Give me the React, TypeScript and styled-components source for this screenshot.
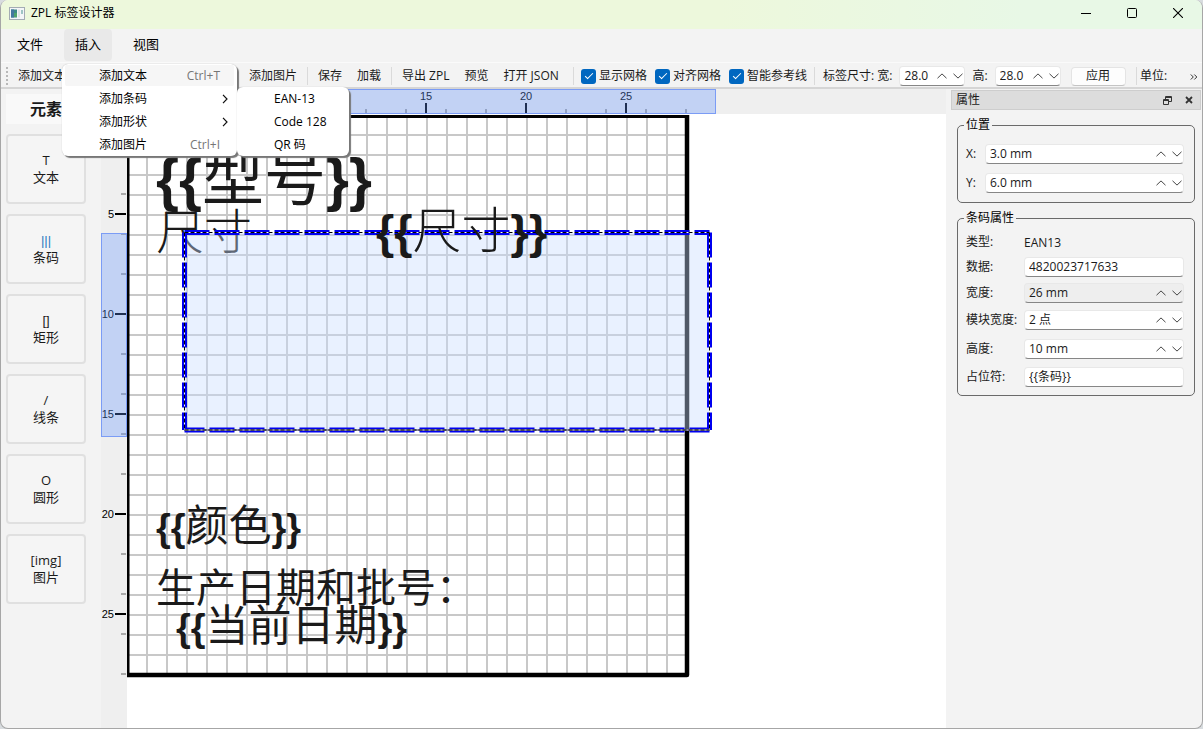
import React from 'react';
import styled, { createGlobalStyle, css } from 'styled-components';

const GlobalStyle = createGlobalStyle`
  *, *::before, *::after { box-sizing: border-box; }
  body {
    margin: 0;
    background: #d8dcdf;
    color: #1a1a1a;
    font: 12px/16px "Open Sans", "Noto Sans CJK SC", sans-serif;
  }
  button, input { font: inherit; color: inherit; margin: 0; }
  button { border: 0; padding: 0; background: none; }
`;

const Window = styled.div`
  display: flex;
  flex-direction: column;
  min-height: 100vh;
  border: 1px solid #a6a6a6;
  border-top: 0;
  border-radius: 8px;
  background: #f3f3f3;
  overflow: hidden;
`;

const TitleBar = styled.header`
  display: flex;
  align-items: flex-start;
  height: 29px;
  padding: 0 1px 0 8px;
  background: linear-gradient(90deg, #edf8dc 0%, #edf8dc 60%, #e8f8e6 85%);
`;

const AppIcon = styled.svg`
  width: 16px;
  height: 13px;
  margin-top: 7px;
`;

const Title = styled.h1`
  flex: 1;
  margin: 5px 0 0 6px;
  font-size: 12px;
  font-weight: 400;
  color: #000;
`;

const CaptionButton = styled.button`
  display: flex;
  align-items: center;
  justify-content: center;
  width: 46px;
  height: 26px;
`;

const MenuBar = styled.nav`
  display: flex;
  gap: 10px;
  height: 33px;
  padding-left: 5px;
`;

const MenuEntry = styled.div`
  position: relative;
`;

const MenuTitle = styled.button<{ $open?: boolean }>`
  width: 48px;
  height: 32px;
  padding-bottom: 3px;
  border-radius: 4px;
  font-size: 13px;
  color: #000;
  background: ${p => (p.$open ? '#e9e9e9' : 'transparent')};
`;

const Menu = styled.div<{ $sub?: boolean }>`
  position: absolute;
  z-index: 2;
  top: 35px;
  left: -2px;
  width: 175px;
  border-radius: 6px;
  background: #fff;
  box-shadow: 2px 2px 1px #777, 0 0 1px #aaa;
  ${p => p.$sub && css`
    z-index: 3;
    top: 58px;
    left: 173px;
    width: 112px;
  `}
`;

const MenuItem = styled.button<{ $active?: boolean; $sub?: boolean; $arrow?: boolean }>`
  display: flex;
  align-items: center;
  justify-content: space-between;
  width: 100%;
  height: 23px;
  padding: 0 ${p => (p.$arrow ? 6 : 14)}px 0 34px;
  color: #000;
  border-radius: 4px;
  border: solid transparent;
  border-width: 1px 3px;
  background: ${p => (p.$active ? '#f6f6f6' : 'transparent')};
  background-clip: padding-box;
`;

const Shortcut = styled.span`
  color: #767676;
`;

const ToolBar = styled.div`
  display: flex;
  align-items: center;
  height: 27px;
  padding: 2px 0 0 5px;
  border-top: 1px solid #fafafa;
  border-bottom: 2px solid #d5d5d5;
  white-space: nowrap;
`;

const Grip = styled.span`
  width: 2px;
  height: 18px;
  margin-right: 10px;
  background: repeating-linear-gradient(180deg, #b8b8b8 0 2px, transparent 2px 4px);
`;

const ToolGroup = styled.div<{ $width: number; $sep?: boolean; $gap?: number; $pad?: number }>`
  display: flex;
  align-items: center;
  flex: 0 0 ${p => p.$width}px;
  gap: ${p => p.$gap ?? 15}px;
  height: 18px;
  ${p => p.$sep && css`
    padding-left: ${p.$pad ?? 10}px;
    border-left: 1px solid #dadada;
  `}
`;

const CheckLabel = styled.label`
  display: flex;
  align-items: center;
  gap: 3px;
`;

const CheckBox = styled.input.attrs({ type: 'checkbox' })`
  appearance: none;
  display: grid;
  place-items: center;
  width: 15px;
  height: 15px;
  border-radius: 3px;
  background: #0067c0;
  &:checked::after {
    content: "";
    width: 8px;
    height: 4px;
    margin-bottom: 3px;
    border: solid #fff;
    border-width: 0 0 1px 1px;
    transform: rotate(-45deg);
  }
`;

const PushButton = styled.button`
  width: 55px;
  height: 19px;
  margin-left: 3px;
  border: 1px solid #e4e4e4;
  border-bottom-color: #c4c4c4;
  border-radius: 4px;
  background: #fdfdfd;
  line-height: 16px;
`;

const Field = styled.div<{ $width?: number; $disabled?: boolean }>`
  display: flex;
  align-items: center;
  width: ${p => (p.$width ? `${p.$width}px` : '100%')};
  height: 20px;
  border: 1px solid #e8e8e8;
  border-bottom-color: #868686;
  border-radius: 4px;
  padding-left: 4px;
  background: ${p => (p.$disabled ? '#eeeeee' : '#fff')};
`;

const FieldInput = styled.input`
  flex: 1;
  min-width: 0;
  height: 16px;
  padding: 0;
  border: 0;
  outline: 0;
  background: transparent;
`;

const StepButton = styled.button`
  display: flex;
  align-items: center;
  justify-content: center;
  width: 20px;
  height: 16px;
  &:last-child { width: 12px; }
`;

const Workspace = styled.main`
  display: flex;
  flex: 1;
`;

const Palette = styled.aside`
  display: flex;
  flex-direction: column;
  gap: 10px;
  width: 100px;
  padding: 5px 15px 5px 5px;
`;

const PaletteTitle = styled.h2`
  margin: 0;
  height: 30px;
  background: #f9f9f9;
  font-size: 16px;
  line-height: 30px;
  text-align: center;
`;

const PaletteCard = styled.button`
  display: flex;
  flex-direction: column;
  align-items: center;
  justify-content: center;
  height: 70px;
  border: 2px solid #e0e0e0;
  border-radius: 4px;
  background: #f5f5f5;
  font-size: 13px;
  line-height: 17px;
`;

const Symbol = styled.span<{ $narrow: boolean; $blue: boolean }>`
  ${p => p.$narrow && css`font-family: "Liberation Sans", sans-serif;`}
  ${p => p.$blue && css`color: #2c7cc0;`}
`;

const Designer = styled.section`
  display: grid;
  flex: 1;
  min-width: 0;
  grid-template-columns: 26px 1fr;
  grid-template-rows: 25px 1fr;
`;

const RulerCorner = styled.div`
  background: #efefef;
`;

const RulerSvg = styled.svg`
  display: block;
  width: 100%;
  height: 100%;
  background: #efefef;
  font: 11px "Liberation Sans", sans-serif;
`;

const Board = styled.svg`
  display: block;
  width: 100%;
  height: 100%;
  background: #fff;
  font-family: "Liberation Sans", "Noto Sans CJK SC", sans-serif;
  fill: #1a1a1a;
`;

const Dock = styled.aside`
  width: 256px;
  padding: 1px 1px 0 5px;
`;

const DockTitle = styled.div`
  display: flex;
  align-items: center;
  height: 20px;
  padding: 0 1px 0 4px;
  border: 1px solid #cdcdcd;
  background: #dcdcdc;
`;

const DockName = styled.h2`
  flex: 1;
  margin: 0;
  font-size: 12px;
  font-weight: 400;
`;

const DockButton = styled.button`
  display: flex;
  align-items: center;
  justify-content: center;
  width: 21px;
  height: 16px;
`;

const Group = styled.fieldset<{ $label: number; $rows: string; $top: number }>`
  display: grid;
  grid-template-columns: ${p => p.$label}px minmax(0, 1fr);
  grid-template-rows: ${p => p.$rows};
  align-items: center;
  min-width: 0;
  margin: 7px 6px 0;
  padding: ${p => p.$top}px 10px 5px 8px;
  border: 1px solid #6a6a6a;
  border-radius: 5px;
  white-space: nowrap;
`;

const Legend = styled.legend`
  margin-left: -2px;
  padding: 0 2px;
  color: #000;
`;

const Value = styled.output`
  padding-top: 1px;
`;

function Steps() {
  return (
    <>
      <StepButton aria-label="增加">
        <svg width="10" height="6" fill="none" stroke="#444"><path d="M.5 5.200 5 .9l4.500 4.300" /></svg>
      </StepButton>
      <StepButton aria-label="减少">
        <svg width="10" height="6" fill="none" stroke="#444"><path d="M.5.8 5 5.100 9.500.8" /></svg>
      </StepButton>
    </>
  );
}

function SpinBox({ id, value, width, disabled }: { id: string; value: string; width?: number; disabled?: boolean }) {
  return (
    <Field $width={width} $disabled={disabled}>
      <FieldInput id={id} defaultValue={value} readOnly={disabled} />
      <Steps />
    </Field>
  );
}

const PX_PER_MM = 20;
const MAJOR = [5, 10, 15, 20, 25];
const MINOR = Array.from({ length: 14 }, (_, i) => (i + 1) * 2).filter(n => n % 5 !== 0);

const Chevron = () => (
  <svg width="6" height="10" fill="none" stroke="#111" strokeWidth="1.200"><path d="M1 .8 5 5 1 9.200" /></svg>
);

function HorizontalRuler() {
  return (
    <RulerSvg>
      {MAJOR.map(n => (
        <g key={n}>
          <text x={n * PX_PER_MM - 1} y="11" textAnchor="middle">{n}</text>
          <path d={`M${n * PX_PER_MM - 1} 14v11`} stroke="#000" strokeWidth="2" />
        </g>
      ))}
      {MINOR.map(n => <path key={n} d={`M${n * PX_PER_MM - 1} 20v5`} stroke="#aaa" strokeWidth="2" />)}
      <rect x="60.500" y=".5" width="528" height="24" fill="rgba(100,149,255,.32)" stroke="#7b9cf5" />
    </RulerSvg>
  );
}

function VerticalRuler() {
  return (
    <RulerSvg>
      {MAJOR.map(n => (
        <g key={n}>
          <text x="13" y={n * PX_PER_MM + 4} textAnchor="end">{n}</text>
          <path d={`M14 ${n * PX_PER_MM}h11`} stroke="#000" strokeWidth="2" />
        </g>
      ))}
      {MINOR.map(n => <path key={n} d={`M20 ${n * PX_PER_MM}h5`} stroke="#aaa" strokeWidth="2" />)}
      <rect x=".5" y="119.500" width="25" height="203" fill="rgba(100,149,255,.32)" stroke="#7b9cf5" />
    </RulerSvg>
  );
}

interface PlaceholderProps { x: number; y: number; size: number; brace: number; weight?: number; children: string }

function PlaceholderText({ x, y, size, brace, weight = 400, children }: PlaceholderProps) {
  return (
    <text x={x} y={y} fontSize={brace} fontWeight="700">
      {'{{'}
      <tspan fontSize={size} fontWeight={weight}>{children}</tspan>
      {'}}'}
    </text>
  );
}

function LabelBoard() {
  return (
    <Board>
      <defs>
        <pattern id="grid" width="20" height="20" x="-1" y="0" patternUnits="userSpaceOnUse">
          <path d="M1 0v20M0 1h20" stroke="#c8c8c8" strokeWidth="2" />
        </pattern>
      </defs>
      <rect width="560" height="560" y="1" fill="url(#grid)" />
      <path d="M1 1v561" stroke="#000" strokeWidth="3" />
      <path d="M0 2.500h560" stroke="#000" strokeWidth="3" />
      <path d="M560 1v560H0" fill="none" stroke="#000" strokeWidth="4.500" strokeLinejoin="round" />
      <text x="29" y="135" fontSize="48" fontWeight="300">尺寸</text>
      <PlaceholderText x={29} y={86} size={62} brace={59}>型号</PlaceholderText>
      <PlaceholderText x={29} y={427} size={43} brace={38}>颜色</PlaceholderText>
      <text x="29" y="488" fontSize="40">生产日期和批号：</text>
      <PlaceholderText x={49} y={527} size={43} brace={38}>当前日期</PlaceholderText>
      <rect x="58" y="118" width="525" height="198" fill="rgba(200,220,255,.4)" />
      <path d="M57.500 118.500H582.500M57.500 118.500V316M582.500 118.500V316" fill="none" stroke="#0000f0" strokeWidth="5" strokeDasharray="25 5" />
      <path d="M57.500 316H582.500" stroke="#0000f0" strokeWidth="5" strokeDasharray="25 5" strokeDashoffset="5" />
      <path d="M57.500 118.500H582.500V316M57.500 118.500V316" fill="none" stroke="#fff" />
      <path d="M57.500 118.500H582.500M57.500 118.500V316M582.500 118.500V316" fill="none" stroke="#000" strokeDasharray="4 2" />
      <path d="M57.500 316H582.500" stroke="#8888aa" strokeWidth="2" />
      <path d="M57.500 316H582.500" stroke="#445" strokeWidth="2" strokeDasharray="4 2" />
      <PlaceholderText x={249} y={134} size={49} brace={47} weight={300}>尺寸</PlaceholderText>
    </Board>
  );
}

const PALETTE = [
  { symbol: 'T', name: '文本' },
  { symbol: '|||', name: '条码', narrow: true, blue: true },
  { symbol: '[]', name: '矩形', narrow: true },
  { symbol: '/', name: '线条' },
  { symbol: 'O', name: '圆形' },
  { symbol: '[img]', name: '图片' },
];

export default function App() {
  return (
    <>
      <GlobalStyle />
      <Window>
        <TitleBar>
          <AppIcon viewBox="0 0 16 13">
            <rect x=".5" y=".5" width="15" height="12" fill="#f4f6f8" stroke="#a4acb4" />
            <path d="M2 2.500h6v8H2z" fill="#3c8a86" />
            <path d="M2 2.500h3v8H2z" fill="#4578a0" />
            <path d="M5 6h3v4H5z" fill="#4fa36c" />
            <path d="M9 2.500h2v8H9z" fill="#dfe3e6" />
            <path d="M12 3h2v4h-2z" fill="#9fc5c4" />
          </AppIcon>
          <Title>ZPL 标签设计器</Title>
          <CaptionButton aria-label="最小化"><svg width="10" height="10"><path d="M0 5.500h10" stroke="#000" /></svg></CaptionButton>
          <CaptionButton aria-label="最大化"><svg width="10" height="10"><rect x=".5" y=".5" width="9" height="9" rx="1" fill="none" stroke="#000" /></svg></CaptionButton>
          <CaptionButton aria-label="关闭"><svg width="10" height="10"><path d="M0 0l10 10M10 0 0 10" stroke="#000" strokeWidth="1.100" /></svg></CaptionButton>
        </TitleBar>

        <MenuBar>
          <MenuEntry><MenuTitle>文件</MenuTitle></MenuEntry>
          <MenuEntry>
            <MenuTitle $open>插入</MenuTitle>
            <Menu>
              <MenuItem $active>添加文本<Shortcut>Ctrl+T</Shortcut></MenuItem>
              <MenuItem $arrow>添加条码<Chevron /></MenuItem>
              <MenuItem $arrow>添加形状<Chevron /></MenuItem>
              <MenuItem>添加图片<Shortcut>Ctrl+I</Shortcut></MenuItem>
            </Menu>
            <Menu $sub>
              <MenuItem $arrow>EAN-13</MenuItem>
              <MenuItem $arrow>Code 128</MenuItem>
              <MenuItem $arrow>QR 码</MenuItem>
            </Menu>
          </MenuEntry>
          <MenuEntry><MenuTitle>视图</MenuTitle></MenuEntry>
        </MenuBar>

        <ToolBar>
          <Grip />
          <ToolGroup $width={231}><button>添加文本</button></ToolGroup>
          <ToolGroup $width={58}><button>添加图片</button></ToolGroup>
          <ToolGroup $width={84} $sep><button>保存</button><button>加载</button></ToolGroup>
          <ToolGroup $width={182} $sep><button>导出 ZPL</button><button>预览</button><button>打开 JSON</button></ToolGroup>
          <ToolGroup $width={241} $sep $gap={8} $pad={7}>
            <CheckLabel><CheckBox defaultChecked />显示网格</CheckLabel>
            <CheckLabel><CheckBox defaultChecked />对齐网格</CheckLabel>
            <CheckLabel><CheckBox defaultChecked />智能参考线</CheckLabel>
          </ToolGroup>
          <ToolGroup $width={322} $sep $gap={7} $pad={8}>
            <label htmlFor="label-width">标签尺寸: 宽:</label>
            <SpinBox id="label-width" value="28.0" width={66} />
            <label htmlFor="label-height">高:</label>
            <SpinBox id="label-height" value="28.0" width={66} />
            <PushButton>应用</PushButton>
          </ToolGroup>
          <ToolGroup $width={54} $sep $pad={3}>单位:</ToolGroup>
          <button aria-label="更多">
            <svg width="8" height="6" fill="none" stroke="#333"><path d="M.8.500 3.300 3 .8 5.500M4.300.500 6.800 3 4.300 5.500" /></svg>
          </button>
        </ToolBar>

        <Workspace>
          <Palette>
            <PaletteTitle>元素</PaletteTitle>
            {PALETTE.map(({ symbol, name, narrow, blue }) => (
              <PaletteCard key={name}>
                <Symbol $narrow={!!narrow} $blue={!!blue}>{symbol}</Symbol>
                <span>{name}</span>
              </PaletteCard>
            ))}
          </Palette>
          <Designer>
            <RulerCorner />
            <HorizontalRuler />
            <VerticalRuler />
            <LabelBoard />
          </Designer>
          <Dock>
            <DockTitle>
              <DockName>属性</DockName>
              <DockButton aria-label="浮动">
                <svg width="9" height="9" fill="none" stroke="#333"><path d="M2.500 3V.5h6v5H6M2.500 1.500h6M.5 3.500h5v5h-5zM.5 4.500h5" /></svg>
              </DockButton>
              <DockButton aria-label="关闭面板">
                <svg width="8" height="8"><path d="M1 1l6 6M7 1 1 7" stroke="#333" strokeWidth="1.800" /></svg>
              </DockButton>
            </DockTitle>
            <Group $label={19} $rows="29px 29px" $top={6}>
              <Legend>位置</Legend>
              <label htmlFor="pos-x">X:</label><SpinBox id="pos-x" value="3.0 mm" />
              <label htmlFor="pos-y">Y:</label><SpinBox id="pos-y" value="6.0 mm" />
            </Group>
            <Group $label={58} $rows="24px 25px 27px 28px 29px 27px" $top={4}>
              <Legend>条码属性</Legend>
              <span>类型:</span><Value>EAN13</Value>
              <label htmlFor="data">数据:</label><Field><FieldInput id="data" defaultValue="4820023717633" /></Field>
              <label htmlFor="width">宽度:</label><SpinBox id="width" value="26 mm" disabled />
              <label htmlFor="module">模块宽度:</label><SpinBox id="module" value="2 点" />
              <label htmlFor="height">高度:</label><SpinBox id="height" value="10 mm" />
              <label htmlFor="placeholder">占位符:</label><Field><FieldInput id="placeholder" defaultValue="{{条码}}" /></Field>
            </Group>
          </Dock>
        </Workspace>
      </Window>
    </>
  );
}
